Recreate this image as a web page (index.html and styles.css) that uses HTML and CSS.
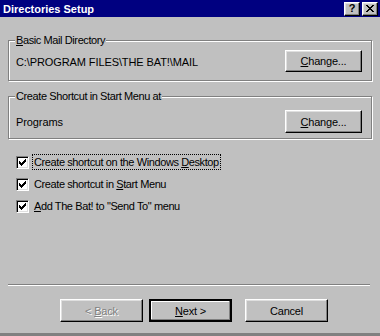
FILE: index.html
```html
<!DOCTYPE html>
<html lang="en">
<head>
  <meta charset="UTF-8">
  <title>Directories Setup</title>
  <link rel="stylesheet" href="styles.css">
</head>
<body>
  <div class="window">
    <!-- Title bar -->
    <div class="titlebar">
      <span class="title">Directories Setup</span>
      <div class="caption-buttons">
        <span class="cap-btn help">?</span>
        <span class="cap-btn">
          <svg width="8" height="7" viewBox="0 0 8 7" shape-rendering="crispEdges">
            <rect x="0" y="0" width="2" height="1"/><rect x="6" y="0" width="2" height="1"/>
            <rect x="1" y="1" width="2" height="1"/><rect x="5" y="1" width="2" height="1"/>
            <rect x="2" y="2" width="4" height="1"/>
            <rect x="3" y="3" width="2" height="1"/>
            <rect x="2" y="4" width="4" height="1"/>
            <rect x="1" y="5" width="2" height="1"/><rect x="5" y="5" width="2" height="1"/>
            <rect x="0" y="6" width="2" height="1"/><rect x="6" y="6" width="2" height="1"/>
          </svg>
        </span>
      </div>
    </div>

    <div class="body">
      <fieldset class="group">
        <legend><u>B</u>asic Mail Directory</legend>
        <div class="group-row">
          <span class="value">C:\PROGRAM FILES\THE BAT!\MAIL</span>
          <button class="btn change"><u>C</u>hange...</button>
        </div>
      </fieldset>

      <fieldset class="group second">
        <legend>Create Shortcut in Start Menu at</legend>
        <div class="group-row">
          <span class="value">Programs</span>
          <button class="btn change"><u>C</u>hange...</button>
        </div>
      </fieldset>

      <div class="checks">
        <label class="check">
          <span class="box"><svg class="tick" width="7" height="7" viewBox="0 0 7 7" shape-rendering="crispEdges"><rect x="6" y="0" width="1" height="1"/><rect x="5" y="1" width="2" height="1"/><rect x="0" y="2" width="1" height="1"/><rect x="4" y="2" width="3" height="1"/><rect x="0" y="3" width="2" height="1"/><rect x="3" y="3" width="3" height="1"/><rect x="0" y="4" width="5" height="1"/><rect x="1" y="5" width="3" height="1"/><rect x="2" y="6" width="1" height="1"/></svg></span>
          <span class="check-text focused">Create shortcut on the Windows <u>D</u>esktop</span>
        </label>
        <label class="check">
          <span class="box"><svg class="tick" width="7" height="7" viewBox="0 0 7 7" shape-rendering="crispEdges"><rect x="6" y="0" width="1" height="1"/><rect x="5" y="1" width="2" height="1"/><rect x="0" y="2" width="1" height="1"/><rect x="4" y="2" width="3" height="1"/><rect x="0" y="3" width="2" height="1"/><rect x="3" y="3" width="3" height="1"/><rect x="0" y="4" width="5" height="1"/><rect x="1" y="5" width="3" height="1"/><rect x="2" y="6" width="1" height="1"/></svg></span>
          <span class="check-text">Create shortcut in <u>S</u>tart Menu</span>
        </label>
        <label class="check">
          <span class="box"><svg class="tick" width="7" height="7" viewBox="0 0 7 7" shape-rendering="crispEdges"><rect x="6" y="0" width="1" height="1"/><rect x="5" y="1" width="2" height="1"/><rect x="0" y="2" width="1" height="1"/><rect x="4" y="2" width="3" height="1"/><rect x="0" y="3" width="2" height="1"/><rect x="3" y="3" width="3" height="1"/><rect x="0" y="4" width="5" height="1"/><rect x="1" y="5" width="3" height="1"/><rect x="2" y="6" width="1" height="1"/></svg></span>
          <span class="check-text"><u>A</u>dd The Bat! to "Send To" menu</span>
        </label>
      </div>

      <div class="footer">
        <div class="separator"></div>
        <div class="buttons">
          <button class="btn wide disabled">&lt; <u>B</u>ack</button>
          <button class="btn wide default"><u>N</u>ext &gt;</button>
          <button class="btn wide cancel">Cancel</button>
        </div>
      </div>
    </div>
  </div>
</body>
</html>
```

FILE: styles.css
```css
* {
  margin: 0;
  padding: 0;
  box-sizing: border-box;
}

body {
  background: #c0c0c0;
  font-family: 'Liberation Sans', Arial, sans-serif;
  font-size: 11px;
  letter-spacing: -0.4px;
  color: #000;
}

.window {
  width: 380px;
  height: 336px;
  display: flex;
  flex-direction: column;
  background: #c0c0c0;
  border-bottom: 3px solid #808080;
}

/* Title bar */
.titlebar {
  height: 17px;
  background: #000080;
  display: flex;
  align-items: center;
  justify-content: space-between;
  padding: 0 2px 0 3px;
}

.title {
  color: #fff;
  font-weight: bold;
  font-size: 11px;
  letter-spacing: 0;
}

.caption-buttons {
  display: flex;
  gap: 2px;
}

.cap-btn {
  width: 16px;
  height: 14px;
  display: flex;
  align-items: center;
  justify-content: center;
  background: #c0c0c0;
  border: 1px solid;
  border-color: #fff #000 #000 #fff;
  box-shadow: inset -1px -1px #808080, inset 1px 1px #dfdfdf;
  font-weight: bold;
  font-size: 11px;
  line-height: 1;
}

/* Body */
.body {
  flex: 1;
  display: flex;
  flex-direction: column;
  padding: 17px 8px 11px 8px;
}

.group {
  border: 1px solid #808080;
  box-shadow: inset 1px 1px #fff, 1px 1px #fff;
  padding: 0 9px 8px 7px;
  width: 364px;
  margin-bottom: 9px;
}

.group.second {
  padding-top: 4px;
  padding-bottom: 5px;
}

.group legend {
  padding: 0 1px;
  margin-left: -1px;
  background: #c0c0c0;
  line-height: 13px;
}

.group-row {
  display: flex;
  align-items: center;
  justify-content: space-between;
  padding-top: 3px;
}

.value {
  padding-top: 1px;
  letter-spacing: -0.1px;
}

/* Buttons */
.btn {
  font-family: inherit;
  font-size: 11px;
  letter-spacing: -0.2px;
  color: #000;
  background: #c0c0c0;
  border: 1px solid;
  border-color: #fff #000 #000 #fff;
  box-shadow: inset -1px -1px #808080, inset 1px 1px #dfdfdf;
  height: 22px;
}

.change {
  width: 77px;
}

.group.second .change {
  height: 23px;
}

.wide {
  width: 83px;
  height: 23px;
}

.btn.disabled {
  color: #808080;
  text-shadow: 1px 1px #fff;
}

.btn.default {
  border: 2px solid #000;
  box-shadow: inset -1px -1px #808080, inset 1px 1px #fff;
}

/* Checkboxes */
.checks {
  display: flex;
  flex-direction: column;
  gap: 6px;
  padding: 6px 0 0 8px;
}

.check {
  display: flex;
  align-items: center;
  height: 16px;
}

.box {
  width: 13px;
  height: 13px;
  background: #fff;
  border: 1px solid;
  border-color: #808080 #fff #fff #808080;
  box-shadow: inset 1px 1px #000, inset -1px -1px #dfdfdf;
  display: flex;
  align-items: center;
  justify-content: center;
  margin-right: 3px;
}

.tick {
  display: block;
}

.check-text {
  padding: 1px 1px;
  border: 1px solid transparent;
}

.check-text.focused {
  border: 1px dotted #000;
}

/* Footer */
.footer {
  margin-top: auto;
}

.separator {
  width: 362px;
  height: 2px;
  border-top: 1px solid #808080;
  border-bottom: 1px solid #fff;
}

.buttons {
  display: flex;
  padding: 13px 0 0 52px;
}

.buttons .default {
  margin-left: 6px;
}

.buttons .cancel {
  margin-left: 13px;
}
```
